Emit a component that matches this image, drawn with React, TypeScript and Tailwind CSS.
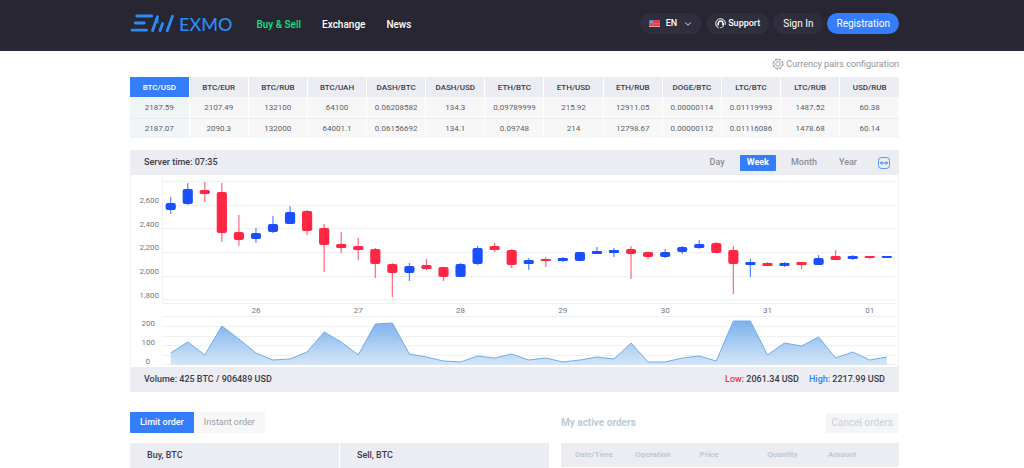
import { ChevronDown } from "lucide-react"

const pairs = [
  { name: "BTC/USD", buy: "2187.59", sell: "2187.07", active: true },
  { name: "BTC/EUR", buy: "2107.49", sell: "2090.3" },
  { name: "BTC/RUB", buy: "132100", sell: "132000" },
  { name: "BTC/UAH", buy: "64100", sell: "64001.1" },
  { name: "DASH/BTC", buy: "0.06208582", sell: "0.06156692" },
  { name: "DASH/USD", buy: "134.3", sell: "134.1" },
  { name: "ETH/BTC", buy: "0.09789999", sell: "0.09748" },
  { name: "ETH/USD", buy: "215.92", sell: "214" },
  { name: "ETH/RUB", buy: "12911.05", sell: "12798.67" },
  { name: "DOGE/BTC", buy: "0.00000114", sell: "0.00000112" },
  { name: "LTC/BTC", buy: "0.01119993", sell: "0.01116086" },
  { name: "LTC/RUB", buy: "1487.52", sell: "1478.68" },
  { name: "USD/RUB", buy: "60.38", sell: "60.14" },
]

// wick top, body top, body bottom, wick bottom, rising
const candles: [number, number, number, number, boolean][] = [
  [22, 28, 35, 39, true],
  [8, 14, 29, 30, true],
  [7, 15, 19, 27, false],
  [8, 17, 58, 67, false],
  [40, 57, 65, 71, false],
  [53, 58, 64, 68, true],
  [41, 49, 57, 58, true],
  [31, 37, 49, 49, true],
  [35, 36, 56, 60, false],
  [49, 53, 70, 97, false],
  [57, 69, 73, 78, false],
  [63, 71, 75, 85, false],
  [73, 74, 89, 103, false],
  [88, 89, 98, 122, false],
  [88, 91, 98, 106, true],
  [84, 90, 94, 95, false],
  [92, 92, 102, 106, false],
  [88, 89, 102, 102, true],
  [71, 73, 89, 90, true],
  [68, 71, 75, 77, false],
  [74, 75, 90, 93, false],
  [83, 85, 89, 95, true],
  [82, 84, 86, 92, false],
  [82, 83, 86, 87, true],
  [77, 77, 86, 86, true],
  [72, 76, 79, 79, true],
  [73, 75, 78, 82, true],
  [71, 74, 79, 104, false],
  [77, 77, 82, 84, false],
  [74, 77, 82, 83, true],
  [71, 72, 77, 79, true],
  [65, 69, 73, 74, true],
  [67, 68, 78, 78, false],
  [71, 75, 89, 119, false],
  [84, 87, 90, 102, true],
  [87, 88, 91, 91, false],
  [87, 88, 91, 92, true],
  [87, 87, 90, 94, false],
  [80, 83, 90, 90, true],
  [75, 81, 85, 85, false],
  [80, 81, 84, 85, true],
  [81, 81, 83, 84, false],
  [81, 81, 83, 83, true],
]

const volumes = [
  178, 167, 180, 151, 164, 178, 185, 184, 177, 157, 167, 180, 149, 148, 179, 182, 186, 187, 181, 183, 179, 185,
  183, 187, 185, 182, 184, 168, 187, 187, 183, 181, 186, 146, 146, 180, 168, 171, 162, 183, 177, 185, 182,
]

const xAt = (i: number) => 40.7 + i * 17.05

function Logo() {
  return (
    <a href="#" className="flex items-center gap-1 text-[#2b8cf7]" aria-label="EXMO">
      <svg width="45" height="20" viewBox="0 0 45 20" fill="none" stroke="currentColor" strokeWidth="2.8" strokeLinecap="round">
        <path d="M6.800 2h15M5.200 9h9M2 16.200h14.500" />
        <path d="M27.500 2.800L22.500 16.800M32.600 9.500L30 16.500M42.500 2.300L37.200 16.800" />
        <path d="M27.800 4v5" strokeWidth="1.200" />
      </svg>
      <span className="font-['Lato',sans-serif] text-[18px] leading-5">EXMO</span>
    </a>
  )
}

function FlagIcon() {
  return (
    <svg width="11" height="7" viewBox="0 0 11 7">
      <rect width="11" height="7" fill="#e9394b" />
      <path d="M0 3.800h11" stroke="#f3a5ae" strokeWidth=".5" />
      <rect width="5" height="3.500" fill="#4a6fc4" />
      <path d="M.8 1.200h3.600M.8 2.400h3.600" stroke="#c5d2f2" strokeWidth=".5" />
      <rect y="6.300" width="11" height=".7" fill="#f4c8cd" />
    </svg>
  )
}

function HeadsetIcon() {
  return (
    <svg width="11" height="11" viewBox="0 0 11 11" fill="none" stroke="#fff">
      <path d="M10.200 6.800A4.800 4.800 0 1 0 3.800 10" strokeWidth="1" />
      <path d="M3.400 7V5.300a2.300 2.300 0 0 1 4.600 0V7" strokeWidth="1.300" />
      <path d="M3.200 5.200v2.400M8.200 5.200v2.400" strokeWidth="1.700" />
      <path d="M8.500 7.400c-.3 1.500-1.300 2.200-3.200 2.300" />
    </svg>
  )
}

function GearIcon() {
  return (
    <svg width="12" height="12" viewBox="0 0 12 12" fill="none" stroke="#8b939b">
      <circle cx="6" cy="6" r="5" strokeWidth="1" strokeDasharray="2.400 1.527" />
      <circle cx="6" cy="6" r="4.300" strokeWidth=".6" />
      <circle cx="6" cy="6" r="2.300" strokeWidth=".8" />
    </svg>
  )
}

function Header() {
  return (
    <header className="flex h-[51px] items-center bg-[#272632] pr-[125px] pl-[130px] pb-1 text-[10px] font-medium text-white">
      <Logo />
      <nav className="ml-6 flex gap-[21px] pt-px">
        <a href="#" className="text-[#0ae67e]">Buy &amp; Sell</a>
        <a href="#">Exchange</a>
        <a href="#">News</a>
      </nav>
      <div className="ml-auto flex gap-1">
        <button className="flex h-[21px] items-center gap-[6px] rounded-full bg-[#2f2e3d] px-[9px] text-[9px]">
          <FlagIcon />
          EN
          <ChevronDown size={10} />
        </button>
        <button className="flex h-[21px] items-center gap-[2px] rounded-full bg-[#2f2e3d] px-[9px] text-[9px]">
          <HeadsetIcon />
          Support
        </button>
        <button className="h-[21px] rounded-full bg-[#2f2e3d] px-[10px] font-normal">Sign In</button>
        <button className="h-[21px] rounded-full bg-[#347dfb] px-[9px] font-normal">Registration</button>
      </div>
    </header>
  )
}

function PairsTable() {
  return (
    <table className="w-full table-fixed border-collapse text-center text-[8px] leading-3">
      <thead>
        <tr className="h-5">
          {pairs.map((p) => (
            <th
              key={p.name}
              scope="col"
              className={`border-r border-white p-0 pt-[2px] font-medium last:border-r-0 ${
                p.active ? "bg-[#347dfb] text-white" : "bg-[#ecedf2] text-[#3a3a48]"
              }`}
            >
              {p.name}
            </th>
          ))}
        </tr>
      </thead>
      <tbody className="text-[#5c5f68]">
        <tr className="h-[21px] border-b border-[#e9eaec]">
          {pairs.map((p) => (
            <td key={p.name} className={`border-r border-r-white p-0 pt-[2px] last:border-r-0 ${p.active ? "bg-[#f1f5f8]" : "bg-[#f7f7f7]"}`}>
              {p.buy}
            </td>
          ))}
        </tr>
        <tr className="h-5">
          {pairs.map((p) => (
            <td key={p.name} className={`border-r border-r-white p-0 pt-[2px] last:border-r-0 ${p.active ? "bg-[#f1f5f8]" : "bg-[#f7f7f7]"}`}>
              {p.sell}
            </td>
          ))}
        </tr>
      </tbody>
    </table>
  )
}

function Chart() {
  const line = volumes.map((y, i) => `${xAt(i)},${y}`).join(" ")

  return (
    <svg viewBox="0 0 769 192" className="block w-full font-normal">
      <defs>
        <linearGradient id="volume" x1="0" y1="0" x2="0" y2="1">
          <stop offset="0" stopColor="#7bb2ec" />
          <stop offset="1" stopColor="#d6e6f8" />
        </linearGradient>
      </defs>
      <g stroke="#f0f0f2">
        {[6.5, 30.5, 53.5, 77.5, 101.5, 124.5, 128.5, 141.5, 151.5, 161.5, 170.5, 180.5, 189.5].map((y) => (
          <path key={y} d={`M32 ${y}H766`} />
        ))}
        <path d="M32.500 2V127M.5 0V192M768.500 0V192" />
      </g>
      <g fill="#74777e" fontSize="8" textAnchor="end">
        {["2,600", "2,400", "2,200", "2,000", "1,800"].map((label, i) => (
          <text key={label} x="29" y={28 + Math.round(i * 23.7)}>{label}</text>
        ))}
        {["200", "100", "0"].map((label, i) => (
          <text key={label} x={label === "0" ? 20 : 25} y={151 + i * 19}>{label}</text>
        ))}
      </g>
      <g fill="#74777e" fontSize="8" textAnchor="middle">
        {["26", "27", "28", "29", "30", "31", "01"].map((day, i) => (
          <text key={day} x={xAt(5 + i * 6)} y="138">{day}</text>
        ))}
      </g>
      {candles.map(([high, top, bottom, low, up], i) => (
        <g key={i} fill={up ? "#1a4fff" : "#ff2744"}>
          <rect x={xAt(i) - 0.6} y={high} width="1.2" height={low - high} opacity=".7" />
          <rect x={xAt(i) - 5.1} y={top} width="10.2" height={bottom - top} rx={Math.min(2, (bottom - top) / 2.5)} />
        </g>
      ))}
      <polygon points={`${xAt(0)},190 ${line} ${xAt(42)},190`} fill="url(#volume)" />
      <polyline points={line} fill="none" stroke="#70abea" />
    </svg>
  )
}

function ChartPanel() {
  return (
    <section className="mt-3 text-[9px] font-medium text-[#3a3a48]">
      <div className="flex h-[25px] items-center bg-[#ecedf2] pr-2 pl-[14px]">
        <span className="pt-px">Server time: 07:35</span>
        <div className="ml-auto flex items-center gap-2 text-[#8b8e98]">
          <button className="h-4 px-[7px]">Day</button>
          <button className="h-4 rounded-[1px] bg-[#347dfb] px-[7px] font-bold text-white">Week</button>
          <button className="h-4 px-[7px]">Month</button>
          <button className="h-4 px-[7px]">Year</button>
          <button className="ml-[5px]" aria-label="Full width">
            <svg width="14" height="14" viewBox="0 0 14 14" fill="none" stroke="#347dfb">
              <rect x="1.500" y="1.500" width="11" height="11" rx="3" strokeWidth=".8" />
              <path d="M3.500 7h7M5 5.400L3.500 7L5 8.600M9 5.400L10.500 7L9 8.600" />
            </svg>
          </button>
        </div>
      </div>
      <Chart />
      <div className="flex h-[25px] items-center gap-[10px] bg-[#ecedf2] px-[14px]">
        <span className="mr-auto">Volume: 425 BTC / 906489 USD</span>
        <span><span className="text-[#f8333c]">Low:</span> 2061.34 USD</span>
        <span><span className="text-[#347dfb]">High:</span> 2217.99 USD</span>
      </div>
    </section>
  )
}

function OrderForms() {
  return (
    <section className="flex-[419] text-[9px] font-medium">
      <div className="flex">
        <button className="h-[21px] rounded-l-[1px] bg-[#347dfb] px-[10px] text-white">Limit order</button>
        <button className="h-[21px] rounded-r-[1px] bg-[#f7f7f7] px-[10px] font-normal text-[#9b9ea5]">Instant order</button>
      </div>
      <div className="mt-[10px] flex gap-px text-[#3a3a48]">
        <h2 className="flex h-[25px] flex-1 items-center bg-[#ecedf2] pl-[17px]">Buy, BTC</h2>
        <h2 className="flex h-[25px] flex-1 items-center bg-[#ecedf2] pl-[17px]">Sell, BTC</h2>
      </div>
    </section>
  )
}

function ActiveOrders() {
  return (
    <section className="flex-[338]">
      <div className="flex h-[21px] items-center justify-between">
        <h2 className="text-[10px] font-bold text-[#bccad4]">My active orders</h2>
        <button className="h-5 bg-[#f4f5f7] px-[6px] text-[10px] text-[#cdd0d3]" disabled>Cancel orders</button>
      </div>
      <table className="mt-[10px] w-full table-fixed text-left text-[8px] text-[#bccad4]">
        <thead>
          <tr className="h-6 bg-[#ecedf2]">
            <th scope="col" className="w-[22%] p-0 pl-[14px] font-bold">Date/Time</th>
            <th scope="col" className="w-[19%] p-0 font-bold">Operation</th>
            <th scope="col" className="w-[20%] p-0 font-bold">Price</th>
            <th scope="col" className="w-[18%] p-0 font-bold">Quantity</th>
            <th scope="col" className="p-0 font-bold">Amount</th>
          </tr>
        </thead>
      </table>
    </section>
  )
}

export default function App() {
  return (
    <div className="bg-white font-['Roboto',sans-serif]">
      <Header />
      <main className="pr-[125px] pl-[130px]">
        <div className="flex h-[26px] items-center justify-end">
          <a href="#" className="flex items-center gap-[2px] text-[9px] text-[#8b939b]">
            <GearIcon />
            <span className="pt-px">Currency pairs configuration</span>
          </a>
        </div>
        <PairsTable />
        <ChartPanel />
        <div className="mt-5 flex gap-3">
          <OrderForms />
          <ActiveOrders />
        </div>
      </main>
    </div>
  )
}
